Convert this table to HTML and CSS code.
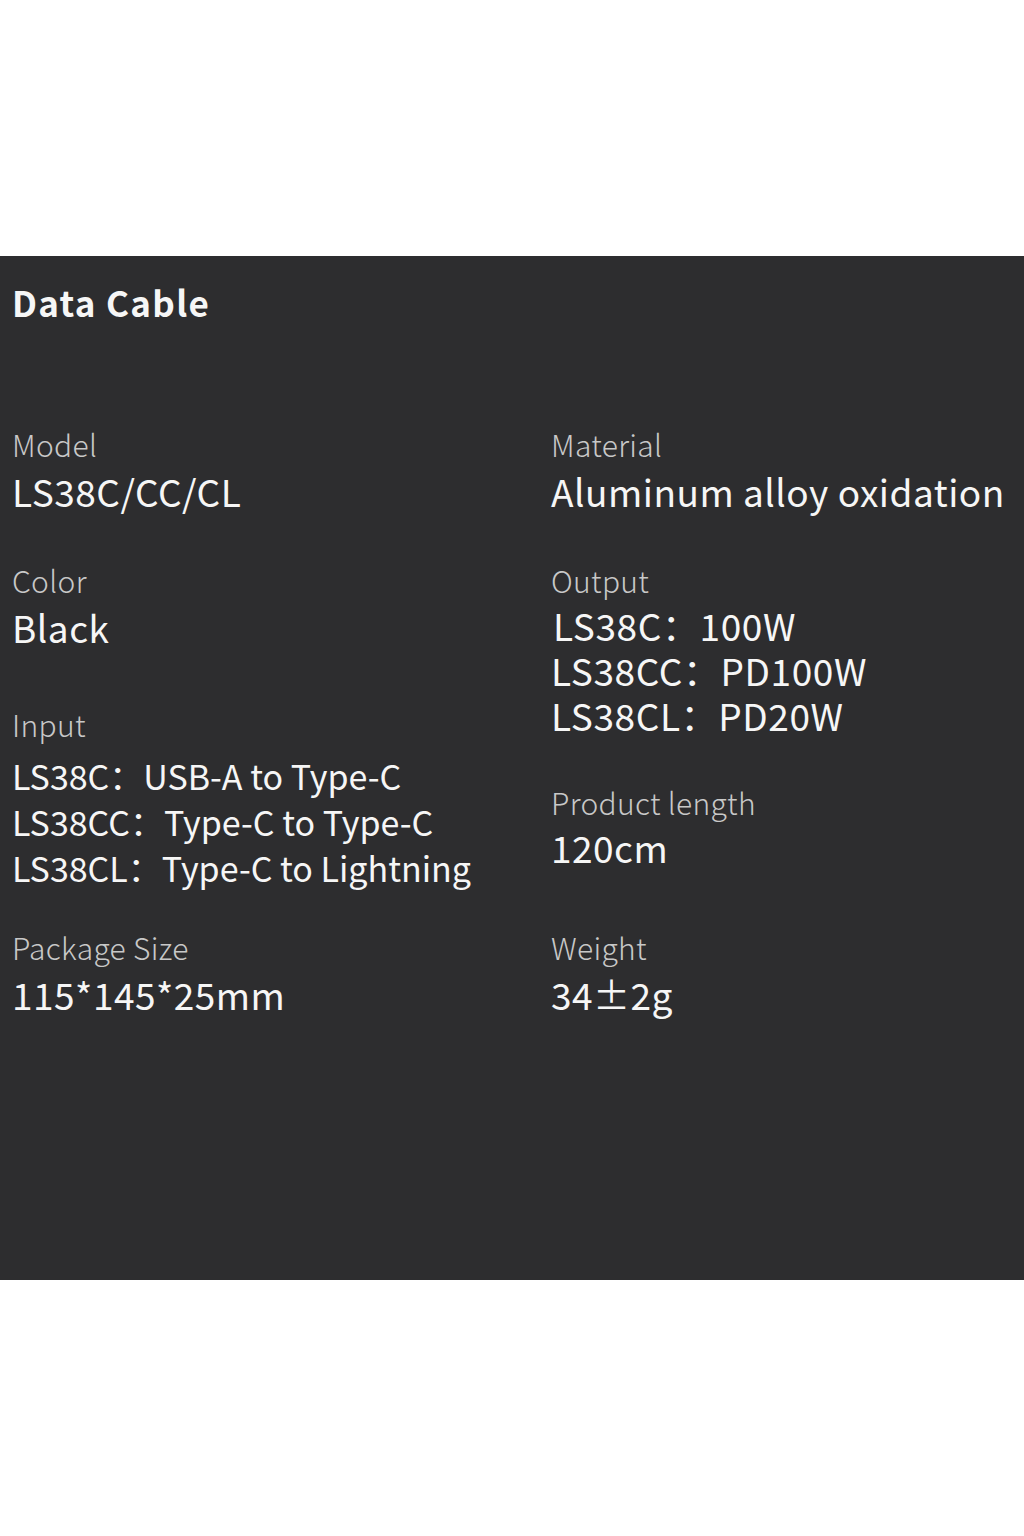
FILE: index.html
```html
<!DOCTYPE html>
<html lang="en">
<head>
<meta charset="utf-8">
<title>Data Cable</title>
<link rel="stylesheet" href="styles.css">
</head>
<body>
<div class="page">
  <section class="panel">
    <h1 class="title">Data Cable</h1>
    <div class="cols">
      <div class="col col-left">
        <div class="spec spec-model">
          <div class="label">Model</div>
          <div class="value">LS38C/CC/CL</div>
        </div>
        <div class="spec spec-color">
          <div class="label">Color</div>
          <div class="value">Black</div>
        </div>
        <div class="spec spec-input">
          <div class="label">Input</div>
          <div class="value list list-input">
            <div>LS38C：USB-A to Type-C</div>
            <div>LS38CC：Type-C to Type-C</div>
            <div>LS38CL：Type-C to Lightning</div>
          </div>
        </div>
        <div class="spec spec-package">
          <div class="label">Package Size</div>
          <div class="value">115*145*25mm</div>
        </div>
      </div>
      <div class="col col-right">
        <div class="spec spec-material">
          <div class="label">Material</div>
          <div class="value">Aluminum alloy oxidation</div>
        </div>
        <div class="spec spec-output">
          <div class="label">Output</div>
          <div class="value list list-output">
            <div class="first-line">LS38C：100W</div>
            <div>LS38CC：PD100W</div>
            <div>LS38CL：PD20W</div>
          </div>
        </div>
        <div class="spec spec-length">
          <div class="label">Product length</div>
          <div class="value value-length">120cm</div>
        </div>
        <div class="spec spec-weight">
          <div class="label">Weight</div>
          <div class="value">34±2g</div>
        </div>
      </div>
    </div>
  </section>
</div>
</body>
</html>
```
FILE: styles.css
```css
* { box-sizing: border-box; margin: 0; padding: 0; }
html, body { background: #ffffff; }
body {
  width: 1024px;
  height: 1536px;
  font-family: "Noto Sans CJK SC", "Noto Sans", sans-serif;
}
.page {
  padding-top: 256px;
}
.panel {
  height: 1024px;
  background: #2d2d2f;
  color: #f4f4f4;
  padding: 21px 0 0 12px;
}
.title {
  font-size: 35px;
  font-weight: 700;
  line-height: 50px;
  color: #f6f6f6;
  letter-spacing: 1.3px;
}
.cols {
  display: grid;
  grid-template-columns: 539px 1fr;
  margin-top: 99px;
}
.label {
  font-size: 30px;
  line-height: 36px;
  font-weight: 300;
  letter-spacing: 0.3px;
  color: #c8c8c8;
}
.value {
  font-size: 37px;
  line-height: 46px;
  font-weight: 400;
  letter-spacing: 0.5px;
  color: #f6f6f6;
  margin-top: 6px;
  white-space: nowrap;
}
.list-input {
  font-size: 34px;
  letter-spacing: 0;
  margin-top: 11px;
}
.list-output {
  line-height: 45px;
  letter-spacing: 0.6px;
  margin-top: 5px;
}
.first-line { padding-left: 2px; }
.value-length { margin-top: 4px; }
.spec-color, .spec-output { margin-top: 48px; }
.spec-input { margin-top: 56px; }
.spec-package { margin-top: 38px; }
.spec-length { margin-top: 46px; }
.spec-weight { margin-top: 59px; }
```
